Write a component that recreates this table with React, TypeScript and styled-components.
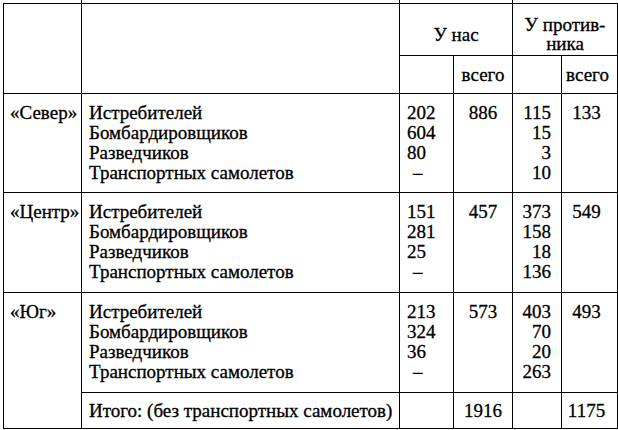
import React from "react";
import styled, { createGlobalStyle } from "styled-components";

const serif = `"Liberation Serif", "Times New Roman", "DejaVu Serif", serif`;

const Global = createGlobalStyle`
  html, body { margin: 0; padding: 0; background: #fff; }
  body { font-family: ${serif}; font-size: 19px; color: #000; }
  #root { width: 618px; height: 430px; overflow: hidden; }
`;

const Table = styled.table`
  border-collapse: collapse;
  table-layout: fixed;
  width: 615px;
  margin-left: 3px;
  font-family: ${serif};
  font-size: 19px;
  color: #000;
  -webkit-text-stroke: 0.3px #000;
`;

const StubRow = styled.tr`
  height: 3px;
`;

const StubCell = styled.td<{ $line?: boolean }>`
  padding: 0;
  height: 3px;
  border-left: ${(p) => (p.$line ? "1px solid #000" : "none")};
`;

const HeadCell = styled.th<{ $h?: number; $pr?: number }>`
  border: 1px solid #000;
  padding: 0 ${(p) => p.$pr ?? 0}px 0 0;
  height: ${(p) => p.$h ?? 0}px;
  font-family: ${serif};
  font-size: 19px;
  font-weight: normal;
  text-align: center;
  vertical-align: middle;
  line-height: 19px;
`;

const TitleCell = styled(HeadCell)`
  padding-top: 9px;
`;

const Row = styled.tr<{ $h: number }>`
  height: ${(p) => p.$h}px;
`;

type Align = "left" | "center" | "right";

const Cell = styled.td<{ $align?: Align; $pl?: number; $pr?: number; $pt?: number }>`
  border: 1px solid #000;
  padding: ${(p) => p.$pt ?? 9}px ${(p) => p.$pr ?? 0}px 0 ${(p) => p.$pl ?? 0}px;
  vertical-align: top;
  text-align: ${(p) => p.$align ?? "left"};
  font-family: ${serif};
  font-size: 19px;
  line-height: 20px;
  white-space: nowrap;
`;

const Line = styled.div<{ $indent?: number }>`
  height: 20px;
  padding-left: ${(p) => p.$indent ?? 0}px;
`;

const TotalCell = styled.td<{ $align?: Align; $pl?: number; $pr?: number }>`
  border: 1px solid #000;
  padding: 0 ${(p) => p.$pr ?? 0}px 0 ${(p) => p.$pl ?? 0}px;
  vertical-align: middle;
  text-align: ${(p) => p.$align ?? "left"};
  font-family: ${serif};
  font-size: 19px;
  line-height: 20px;
  white-space: nowrap;
`;

const kinds = ["Истребителей", "Бомбардировщиков", "Разведчиков", "Транспортных самолетов"];

type Group = {
  name: string;
  ours: string[];
  oursTotal: string;
  theirs: string[];
  theirsTotal: string;
  h: number;
};

const groups: Group[] = [
  { name: "«Север»", ours: ["202", "604", "80", "–"], oursTotal: "886", theirs: ["115", "15", "3", "10"], theirsTotal: "133", h: 99 },
  { name: "«Центр»", ours: ["151", "281", "25", "–"], oursTotal: "457", theirs: ["373", "158", "18", "136"], theirsTotal: "549", h: 100 },
  { name: "«Юг»", ours: ["213", "324", "36", "–"], oursTotal: "573", theirs: ["403", "70", "20", "263"], theirsTotal: "493", h: 100 },
];

export default function App() {
  return (
    <>
      <Global />
      <Table>
        <colgroup>
          <col style={{ width: 78 }} />
          <col style={{ width: 318 }} />
          <col style={{ width: 54 }} />
          <col style={{ width: 59 }} />
          <col style={{ width: 49 }} />
          <col style={{ width: 56 }} />
        </colgroup>
        <tbody>
          <StubRow>
            <StubCell />
            <StubCell $line />
            <StubCell $line colSpan={2} />
            <StubCell $line colSpan={2} />
          </StubRow>
          <tr>
            <HeadCell rowSpan={2} />
            <HeadCell rowSpan={2} />
            <TitleCell colSpan={2} $h={42}>
              У нас
            </TitleCell>
            <TitleCell colSpan={2} $h={42}>
              У против-
              <br />
              ника
            </TitleCell>
          </tr>
          <tr>
            <HeadCell $h={37} />
            <HeadCell $h={37}>всего</HeadCell>
            <HeadCell $h={37} />
            <HeadCell $h={37} $pr={4}>
              всего
            </HeadCell>
          </tr>
          {groups.map((g, gi) => (
            <Row key={g.name} $h={g.h}>
              <Cell $pl={6} rowSpan={gi === groups.length - 1 ? 2 : 1}>
                {g.name}
              </Cell>
              <Cell $pl={7}>
                {kinds.map((k) => (
                  <Line key={k}>{k}</Line>
                ))}
              </Cell>
              <Cell $pl={7}>
                {g.ours.map((v, i) => (
                  <Line key={i} $indent={v === "–" ? 6 : 0}>
                    {v}
                  </Line>
                ))}
              </Cell>
              <Cell $align="center">{g.oursTotal}</Cell>
              <Cell $align="right" $pr={10}>
                {g.theirs.map((v, i) => (
                  <Line key={i}>{v}</Line>
                ))}
              </Cell>
              <Cell $align="center" $pr={6}>
                {g.theirsTotal}
              </Cell>
            </Row>
          ))}
          <Row $h={36}>
            <TotalCell $pl={7}>Итого: (без транспортных самолетов)</TotalCell>
            <TotalCell />
            <TotalCell $align="center">1916</TotalCell>
            <TotalCell />
            <TotalCell $align="center" $pr={6}>
              1175
            </TotalCell>
          </Row>
        </tbody>
      </Table>
    </>
  );
}
